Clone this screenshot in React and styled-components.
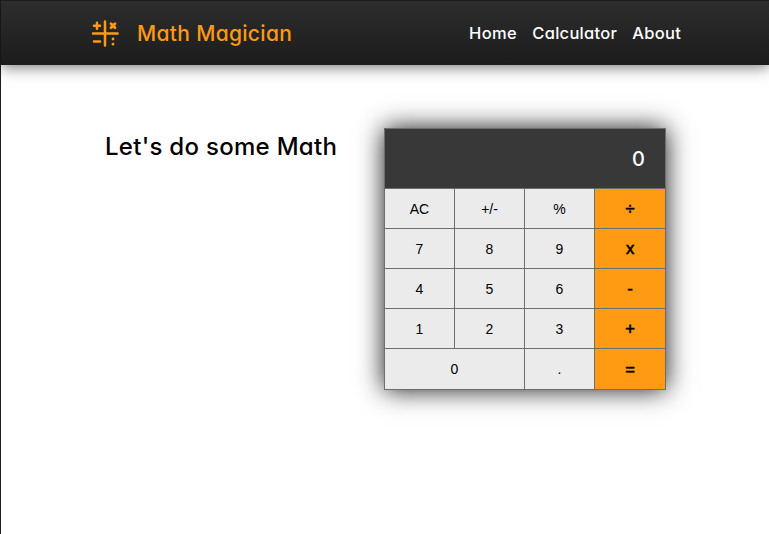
import React from 'react';
import styled, { createGlobalStyle } from 'styled-components';

const GlobalStyle = createGlobalStyle`
  * { box-sizing: border-box; }
  body {
    margin: 0;
    background: #fff;
    font-family: Inter, 'Noto Sans', sans-serif;
    font-feature-settings: 'cv11';
    overflow: hidden;
  }
`;

const Page = styled.div`
  height: 100vh;
  border-left: 1px solid #1e1e1e;
`;

const Header = styled.header`
  height: 65px;
  padding: 1px 88px 0 90px;
  display: flex;
  align-items: center;
  justify-content: space-between;
  border-top: 1px solid #1c1c1c;
  background: linear-gradient(#2d2d2d, #1c1c1c);
  box-shadow: 0 2px 14px rgba(0, 0, 0, 0.55);
`;

const Brand = styled.div`
  display: flex;
  align-items: center;
  gap: 18px;
  color: #ff9a13;
`;

const BrandName = styled.span`
  font-size: 21px;
  font-weight: 500;
  line-height: 30px;
  letter-spacing: 0.32px;
  white-space: nowrap;
`;

const Nav = styled.nav`
  display: flex;
  gap: 15.2px;
  padding-bottom: 2px;
`;

const NavLink = styled.a`
  color: #fff;
  font-size: 16.5px;
  font-weight: 500;
  line-height: 24px;
  letter-spacing: ${(p) => p.$tracking};
  text-decoration: none;
`;

const Main = styled.main`
  display: flex;
  align-items: flex-start;
  justify-content: space-between;
  padding: 63px 103px 0 104px;
`;

const Heading = styled.h1`
  margin: 0;
  font-size: 24px;
  font-weight: 500;
  line-height: 38px;
  letter-spacing: 0.29px;
  color: #000;
  white-space: nowrap;
`;

const Calculator = styled.section`
  width: 282px;
  height: 262px;
  display: grid;
  grid-template-columns: 69px 69px 69px 70px;
  grid-template-rows: 59px repeat(4, 39px) 40px;
  gap: 1px;
  border: 1px solid #6e6e6e;
  background: #6e6e6e;
  box-shadow: 0 0 24px rgba(0, 0, 0, 0.9);
`;

const Display = styled.output`
  grid-column: 1 / -1;
  display: flex;
  align-items: center;
  justify-content: flex-end;
  padding: 1px 20px 0 0;
  background: #383838;
  color: #fff;
  font-size: 20px;
  font-weight: 500;
`;

const Key = styled.button`
  grid-column: span ${(p) => p.$span || 1};
  padding: 0;
  border: 0;
  background: ${(p) => (p.$operator ? '#ff9a13' : '#ebebeb')};
  color: #000;
  font-family: 'Liberation Sans', Arial, sans-serif;
  font-size: ${(p) => (p.$operator ? '16.5px' : '14px')};
  font-weight: 400;
  -webkit-text-stroke: ${(p) => (p.$operator ? '0.6px #000' : '0')};
`;

const keys = [
  'AC', '+/-', '%', '÷',
  '7', '8', '9', 'x',
  '4', '5', '6', '-',
  '1', '2', '3', '+',
  '0', '.', '=',
];
const operators = ['÷', 'x', '-', '+', '='];

const Logo = () => (
  <svg width="28" height="28" viewBox="0 0 28 28" fill="none" stroke="currentColor" strokeWidth="2.5" strokeLinecap="round">
    <path d="M14 1.5v24M2 13.5h24.6" />
    <path d="M6 2.7v6M3 5.7h6M3 21.5h6" />
    <path d="M20 3.7l4 4M24 3.7l-4 4" strokeWidth="2.8" />
    <path d="M22 18.9v.1M22 24.1v.1" strokeWidth="2.8" />
  </svg>
);

export default function App() {
  return (
    <>
      <GlobalStyle />
      <Page>
        <Header>
          <Brand>
            <Logo />
            <BrandName>Math Magician</BrandName>
          </Brand>
          <Nav>
            <NavLink href="#home" $tracking="0.38px">Home</NavLink>
            <NavLink href="#calculator" $tracking="0.28px">Calculator</NavLink>
            <NavLink href="#about" $tracking="0.25px">About</NavLink>
          </Nav>
        </Header>
        <Main>
          <Heading>Let's do some Math</Heading>
          <Calculator>
            <Display>0</Display>
            {keys.map((k) => (
              <Key key={k} $operator={operators.includes(k)} $span={k === '0' ? 2 : 1}>
                {k}
              </Key>
            ))}
          </Calculator>
        </Main>
      </Page>
    </>
  );
}
